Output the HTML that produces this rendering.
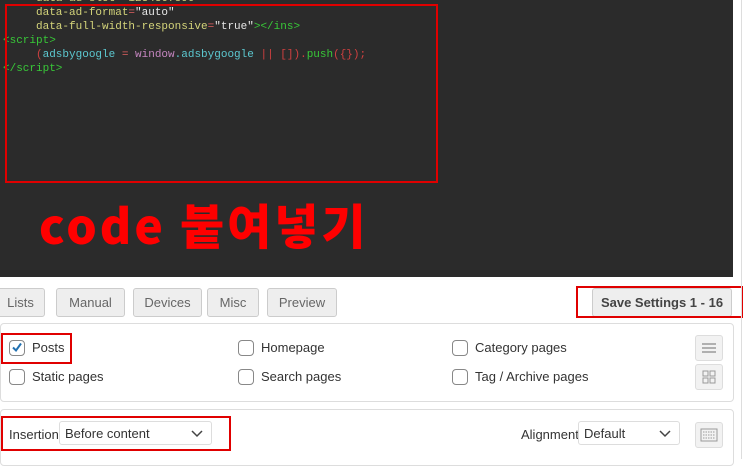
<!DOCTYPE html>
<html><head><meta charset="utf-8"><style>
body{margin:0;width:743px;height:459px;background:#fff;position:relative;overflow:hidden;font-family:"Liberation Sans",Arial,sans-serif;}
.ed{position:absolute;left:0;top:0;width:733px;height:277px;background:#2b2b2b;overflow:hidden;}
.code{position:absolute;left:3px;top:-8px;font-family:"Liberation Mono","DejaVu Sans Mono",monospace;font-size:11px;line-height:14px;color:#dcdcaa;white-space:pre;}
.a{color:#d4d47a}.s{color:#e6e6e6}.t{color:#38c838}.c{color:#5cc8d0}.k{color:#c586c0}.r{color:#d04040}.p{color:#e06060}
.box{position:absolute;border:2px solid #e00000;}
.big{position:absolute;left:39px;top:188px;font-family:"Noto Sans CJK KR","NanumGothic",sans-serif;font-weight:900;font-size:48px;color:#ff0000;letter-spacing:3px;}
.tab{position:absolute;top:288px;height:27px;border:1px solid #ccc;border-radius:3px;background:#eee;color:#666;font-size:13px;line-height:27px;text-align:center;}
.panel{position:absolute;left:0;width:732px;border:1px solid #ddd;border-radius:4px;background:#fff;}
.cb{position:absolute;width:14px;height:14px;border:1px solid #888;border-radius:4px;background:#fff;}
.lb{position:absolute;font-size:13px;color:#333;}
.sel{position:absolute;height:24px;border:1px solid #ddd;border-radius:3px;font-size:13px;line-height:24px;color:#333;padding-left:5px;box-sizing:border-box;}
.ib{position:absolute;width:26px;height:24px;border:1px solid #ddd;border-radius:3px;background:#f2f2f2;}
</style></head><body>
<div class="ed"><div class="code"><span class="a">     data-ad-slot="1234567890"</span>
<span class="a">     data-ad-format</span><span class="p">=</span><span class="s">"auto"</span>
<span class="a">     data-full-width-responsive</span><span class="p">=</span><span class="s">"true"</span><span class="t">&gt;&lt;/ins&gt;</span>
<span class="t">&lt;script&gt;</span>
<span class="r">     (</span><span class="c">adsbygoogle </span><span class="p">= </span><span class="k">window</span><span class="c">.adsbygoogle </span><span class="r">|| []).</span><span class="t">push</span><span class="r">({});</span>
<span class="t">&lt;/script&gt;</span></div></div>
<div class="box" style="left:5px;top:4px;width:429px;height:175px"></div>
<div class="big">code 붙여넣기</div>
<div class="tab" style="left:-4px;width:47px">Lists</div>
<div class="tab" style="left:56px;width:67px">Manual</div>
<div class="tab" style="left:133px;width:67px">Devices</div>
<div class="tab" style="left:207px;width:50px">Misc</div>
<div class="tab" style="left:267px;width:68px">Preview</div>
<div class="tab" style="left:592px;width:138px;font-weight:bold;color:#444">Save Settings 1 - 16</div>
<div class="box" style="left:576px;top:286px;width:163px;height:28px"></div>
<div class="panel" style="top:323px;height:77px"></div>
<div class="cb" style="left:9px;top:340px"></div>
<svg style="position:absolute;left:10px;top:340px" width="14" height="14"><path d="M3 7.5l3 3 5-7" stroke="#2271b1" stroke-width="2" fill="none"/></svg>
<div class="lb" style="left:32px;top:340px">Posts</div>
<div class="box" style="left:1px;top:333px;width:67px;height:27px"></div>
<div class="cb" style="left:238px;top:340px"></div><div class="lb" style="left:261px;top:340px">Homepage</div>
<div class="cb" style="left:452px;top:340px"></div><div class="lb" style="left:475px;top:340px">Category pages</div>
<div class="cb" style="left:9px;top:369px"></div><div class="lb" style="left:32px;top:369px">Static pages</div>
<div class="cb" style="left:238px;top:369px"></div><div class="lb" style="left:261px;top:369px">Search pages</div>
<div class="cb" style="left:452px;top:369px"></div><div class="lb" style="left:475px;top:369px">Tag / Archive pages</div>
<div class="ib" style="left:695px;top:335px"><svg width="26" height="24"><path d="M6 8h14M6 12h14M6 16h14" stroke="#999" stroke-width="1.5"/></svg></div>
<div class="ib" style="left:695px;top:364px"><svg width="26" height="24"><path d="M7 6h5v5H7zM14 6h5v5h-5zM7 13h5v5H7zM14 13h5v5h-5z" stroke="#999" fill="none"/></svg></div>
<div class="panel" style="top:409px;height:55px"></div>
<div class="lb" style="left:9px;top:427px">Insertion</div>
<div class="sel" style="left:59px;top:421px;width:153px">Before content<svg style="position:absolute;right:8px;top:8px" width="12" height="8"><path d="M1 1l5 5 5-5" stroke="#444" stroke-width="1.5" fill="none"/></svg></div>
<div class="box" style="left:1px;top:416px;width:226px;height:31px"></div>
<div class="lb" style="left:521px;top:427px">Alignment</div>
<div class="sel" style="left:578px;top:421px;width:102px">Default<svg style="position:absolute;right:8px;top:8px" width="12" height="8"><path d="M1 1l5 5 5-5" stroke="#444" stroke-width="1.5" fill="none"/></svg></div>
<div class="ib" style="left:695px;top:422px"><svg width="26" height="24"><rect x="5" y="6" width="16" height="12" stroke="#999" fill="none"/><path d="M7 9h12M7 12h12M7 15h12" stroke="#999" stroke-dasharray="1.5 1"/></svg></div>
<div style="position:absolute;left:741px;top:0;width:1px;height:459px;background:#ddd"></div>
</body></html>
